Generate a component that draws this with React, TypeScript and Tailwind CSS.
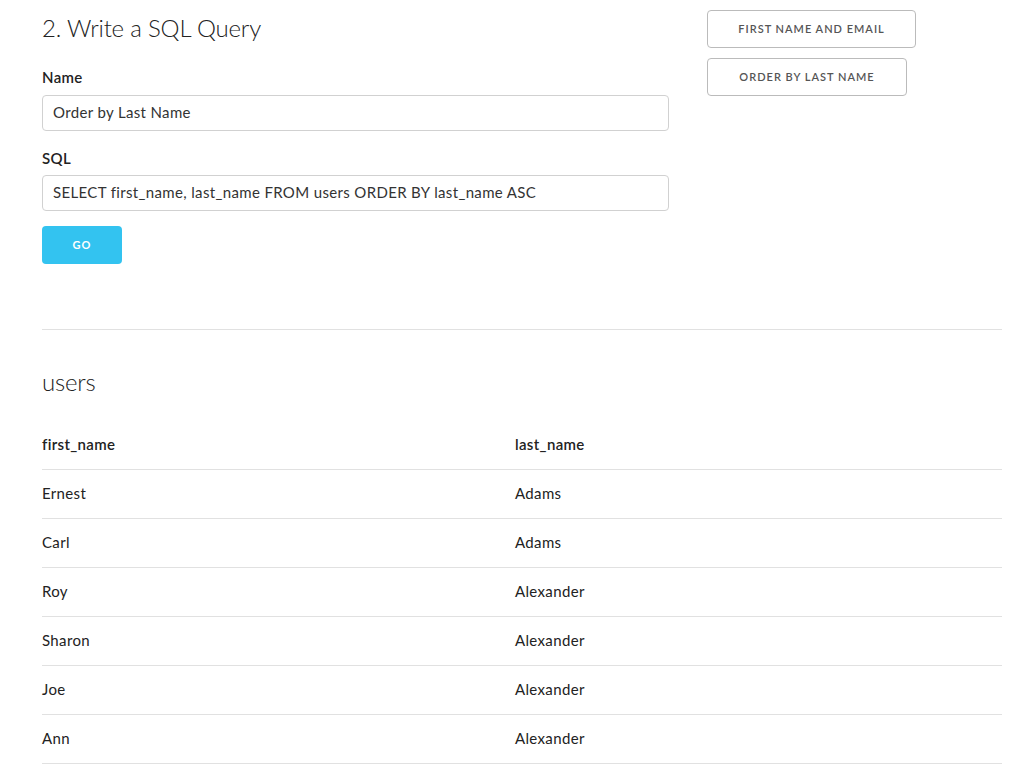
import React from "react";

const rows: [string, string][] = [
  ["Ernest", "Adams"],
  ["Carl", "Adams"],
  ["Roy", "Alexander"],
  ["Sharon", "Alexander"],
  ["Joe", "Alexander"],
  ["Ann", "Alexander"],
];

export default function App() {
  return (
    <div
      className="min-h-[776px] bg-white text-[#222] text-[15px] tracking-[0.35px]"
      style={{ fontFamily: "Lato, 'Open Sans', sans-serif" }}
    >
      <div className="w-[960px] ml-[42px]">
        <div className="flex">
          <div className="w-[627px] shrink-0">
            <h4 className="text-[24px] font-light leading-[32px] mt-[12px] mb-[21px] tracking-[-0.2px]">
              2. Write a SQL Query
            </h4>
            <label className="block font-semibold leading-[24px] mb-[6px]">Name</label>
            <div className="h-[36px] border border-[#d1d1d1] rounded-[4px] px-[10px] pb-[2px] flex items-center text-[#333] mb-[15px]">
              Order by Last Name
            </div>
            <label className="block font-semibold leading-[24px] mb-[5px]">SQL</label>
            <div className="h-[36px] border border-[#d1d1d1] rounded-[4px] px-[10px] pb-[2px] flex items-center text-[#333] mb-[15px]">
              SELECT first_name, last_name FROM users ORDER BY last_name ASC
            </div>
            <button className="w-[80px] h-[38px] rounded-[4px] bg-[#33c3f0] text-white text-[11px] font-bold tracking-[1px] uppercase">
              Go
            </button>
          </div>
          <div className="ml-[38px] flex flex-col items-start gap-[10px] pt-[10px]">
            <button className="h-[38px] w-[209px] border border-[#bbb] rounded-[4px] text-[#555] text-[11px] font-semibold tracking-[1px] uppercase">
              First name and email
            </button>
            <button className="h-[38px] w-[200px] border border-[#bbb] rounded-[4px] text-[#555] text-[11px] font-semibold tracking-[1px] uppercase">
              Order by last name
            </button>
          </div>
        </div>
        <div className="h-px bg-[#e1e1e1] mt-[65px]" />
        <h4 className="text-[24px] font-light leading-[32px] mt-[36px] tracking-[-0.2px]">users</h4>
        <div className="mt-[22px]">
          <div className="flex h-[50px] items-center border-b border-[#e1e1e1] font-semibold">
            <div className="w-[473px]">first_name</div>
            <div>last_name</div>
          </div>
          {rows.map(([f, l], i) => (
            <div key={i} className="flex h-[49px] pb-[2px] items-center border-b border-[#e1e1e1]">
              <div className="w-[473px]">{f}</div>
              <div>{l}</div>
            </div>
          ))}
        </div>
      </div>
    </div>
  );
}
